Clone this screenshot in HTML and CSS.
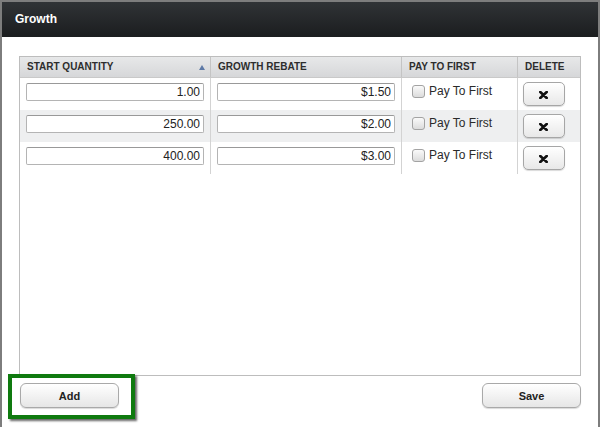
FILE: index.html
```html
<!DOCTYPE html>
<html>
	<head>
		<meta charset="UTF-8">
		<title>Growth</title>
		<link rel="stylesheet" href="styles.css">
	</head>
	<body>
		<div class="dialog">
			<div class="titlebar">Growth</div>
			<div class="content">
				<div class="grid">
					<div class="row head">
						<div class="cell">START QUANTITY<span class="sort"></span></div>
						<div class="cell">GROWTH REBATE</div>
						<div class="cell">PAY TO FIRST</div>
						<div class="cell">DELETE</div>
					</div>
					<div class="row">
						<div class="cell"><input class="num" type="text" value="1.00"></div>
						<div class="cell"><input class="num" type="text" value="$1.50"></div>
						<div class="cell"><label class="chk"><input type="checkbox">Pay To First</label></div>
						<div class="cell"><button class="del"><svg width="9" height="8" viewBox="0 0 9 8"><path d="M1.3 1 L7.7 7 M7.7 1 L1.3 7" stroke="#111" stroke-width="2.6" stroke-linecap="round"/></svg></button></div>
					</div>
					<div class="row alt">
						<div class="cell"><input class="num" type="text" value="250.00"></div>
						<div class="cell"><input class="num" type="text" value="$2.00"></div>
						<div class="cell"><label class="chk"><input type="checkbox">Pay To First</label></div>
						<div class="cell"><button class="del"><svg width="9" height="8" viewBox="0 0 9 8"><path d="M1.3 1 L7.7 7 M7.7 1 L1.3 7" stroke="#111" stroke-width="2.6" stroke-linecap="round"/></svg></button></div>
					</div>
					<div class="row">
						<div class="cell"><input class="num" type="text" value="400.00"></div>
						<div class="cell"><input class="num" type="text" value="$3.00"></div>
						<div class="cell"><label class="chk"><input type="checkbox">Pay To First</label></div>
						<div class="cell"><button class="del"><svg width="9" height="8" viewBox="0 0 9 8"><path d="M1.3 1 L7.7 7 M7.7 1 L1.3 7" stroke="#111" stroke-width="2.6" stroke-linecap="round"/></svg></button></div>
					</div>
				</div>
				<div class="footer">
					<button class="btn">Add</button>
					<button class="btn">Save</button>
				</div>
			</div>
			<div class="highlight"></div>
		</div>
	</body>
</html>
```
FILE: styles.css
```css
body{margin:0; font-family:"Liberation Sans", Arial, sans-serif; color:#333;}
.dialog{
	width:600px; height:427px; box-sizing:border-box; position:relative;
	border:2px solid #7d7d7d; border-bottom:none; background:#fff; overflow:hidden;
}
.titlebar{
	height:35px; box-sizing:border-box; padding:10px 0 0 13px;
	background:linear-gradient(#303336, #1b1d1f);
	color:#fff; font-size:12px; font-weight:bold; line-height:14px;
}
.content{padding:19px 17px 0 17px;}
.grid{height:320px; box-sizing:border-box; border:1px solid #bdbdbd;}
.row{display:grid; grid-template-columns:191px 191px 116px 62px; height:32px;}
.row .cell{border-right:1px solid #d3d3d3; box-sizing:border-box;}
.row .cell:last-child{border-right:none;}
.row.alt{background:#eeeff0;}
.row.head{height:21px; border-bottom:1px solid #c9c9c9; box-sizing:border-box;
	background:linear-gradient(#e7e8e9, #d6d7d9);}
.row.head .cell{
	font-size:10px; font-weight:bold; line-height:20px; padding-left:7px;
	color:#2d2d2d; position:relative; border-right-color:#c4c4c4;
}
.sort{
	position:absolute; right:5px; top:8px; width:0; height:0;
	border-left:3px solid transparent; border-right:3px solid transparent;
	border-bottom:5px solid #5d79a6;
}
.num{
	display:block; margin:5px 0 0 6px; width:178px; height:18px; box-sizing:border-box;
	border:1px solid #b4b4b4; border-top-color:#999; border-radius:2px;
	font-family:"Liberation Sans", Arial, sans-serif; font-size:12px; color:#222;
	text-align:right; padding:0 3px 0 0; background:#fff;
}
.chk{display:flex; align-items:flex-start; padding:6px 0 0 10px; font-size:12px; line-height:14px; color:#2a2a2a;}
.chk input{
	appearance:none; -webkit-appearance:none; margin:1px 4px 0 0; width:13px; height:13px;
	border:1px solid #a3a3a3; border-radius:3px; background:linear-gradient(#fafafa, #dcdcdc);
}
.del{
	display:flex; align-items:center; justify-content:center;
	margin:4px 0 0 5px; width:42px; height:24px; padding:0;
	border:1px solid #a6a6a6; border-radius:5px;
	background:linear-gradient(#ffffff, #e8e8e8); box-shadow:0 1px 1px rgba(0,0,0,.15);
}
.del svg{margin-top:2px; margin-left:-1px;}
.footer{display:flex; justify-content:space-between; padding:7px 0 0 1px;}
.btn{
	width:99px; height:25px; border:1px solid #a9a9a9; border-radius:6px;
	background:linear-gradient(#ffffff, #e6e6e6); box-shadow:0 1px 1px rgba(0,0,0,.15);
	font-family:"Liberation Sans", Arial, sans-serif; font-size:11px; font-weight:bold; color:#222;
}
.highlight{
	position:absolute; left:6px; top:372px; width:127px; height:45px; box-sizing:border-box;
	border:4px solid #0f7a0f; box-shadow:2px 2px 2px rgba(0,0,0,.6);
}
```
